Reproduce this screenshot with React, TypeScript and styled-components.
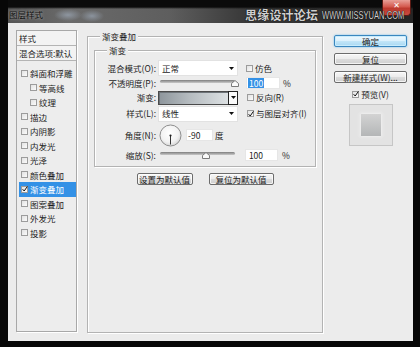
import React from "react";
import styled, { createGlobalStyle, css } from "styled-components";

const FONT = `"Noto Sans CJK SC", "Liberation Sans", sans-serif`;

const GlobalStyle = createGlobalStyle`
  html, body { margin: 0; padding: 0; background: #070707; }
  #root { width: 420px; height: 347px; }
`;

const Screen = styled.div`
  width: 420px;
  height: 347px;
  box-sizing: border-box;
  padding: 0 7px 6px 8px;
  background: #070707;
  display: flex;
  flex-direction: column;
  overflow: hidden;
  font-family: ${FONT};
  font-size: 8.5px;
  line-height: 1;
  color: #1c1c1c;
`;

const TitleBar = styled.div`
  position: relative;
  flex: none;
  height: 23px;
  box-sizing: border-box;
  display: flex;
  justify-content: space-between;
  align-items: flex-start;
  padding: 0 1px 0 1px;
  background:
    linear-gradient(to bottom, #0b0b0b 0, #0b0b0b 7px, rgba(0, 0, 0, 0) 9px),
    radial-gradient(14px 6px at 60px 15px, #8e96a0, rgba(0, 0, 0, 0)),
    radial-gradient(12px 6px at 84px 16px, #8b939d, rgba(0, 0, 0, 0)),
    linear-gradient(to right, #555 0%, #6a6a6a 15%, #5e5e5e 40%, #3a3a3a 58%, #242424 100%);
`;

const Title = styled.span`
  margin-top: 10px;
  color: #121212;
  text-shadow: 0 0 3px rgba(255, 255, 255, 0.55);
`;

const CloseButton = styled.div`
  position: relative;
  z-index: 2;
  width: 29px;
  height: 16px;
  margin-right: 1px;
  box-sizing: border-box;
  border: 1px solid #5a1a14;
  border-top: none;
  border-radius: 0 0 4px 4px;
  background-color: #c9483c;
  background-image: linear-gradient(#e8a098, #d4594e 45%, #bd3a2f 55%, #c94a3e);
  display: flex;
  align-items: center;
  justify-content: center;
  padding-bottom: 3px;
  color: #fff;
  font-family: "DejaVu Sans", sans-serif;
  font-size: 8px;
  font-weight: bold;
`;

const Watermark = styled.div`
  position: absolute;
  z-index: 3;
  left: 237px;
  top: 9px;
  display: flex;
  align-items: center;
  gap: 4px;
  color: #cfcfcf;
  text-shadow: 0 0 1px #000, 0 0 1px #000;
  white-space: nowrap;
`;

const WatermarkCn = styled.span`
  font-size: 12px;
  font-weight: bold;
  letter-spacing: 0.2px;
`;

const WatermarkUrl = styled.span`
  font-family: "Liberation Sans", sans-serif;
  font-size: 10.5px;
  display: inline-block;
  transform: scaleX(0.72);
  transform-origin: left center;
`;

const Body = styled.div`
  flex: 1;
  display: flex;
  align-items: flex-start;
  padding: 7px 6px 0 8px;
  background: #ececec;
`;

/* left column: style list */

const StyleList = styled.div`
  width: 61px;
  height: 302px;
  box-sizing: border-box;
  border: 1px solid #a8a8a8;
  box-shadow: 1px 1px 0 #fff;
  background: #ededed;
  display: flex;
  flex-direction: column;
`;

const ListHeader = styled.div<{ $h: number }>`
  height: ${(p) => p.$h}px;
  box-sizing: border-box;
  display: flex;
  align-items: center;
  padding-left: 2px;
  border-bottom: 1px solid #b4b4b4;
  background: #f3f3f3;
  white-space: nowrap;
`;

const ListBody = styled.div`
  padding-top: 5px;
  display: flex;
  flex-direction: column;
`;

const ListItem = styled.div<{ $indent?: boolean; $selected?: boolean }>`
  height: 14.5px;
  margin-left: 2px;
  padding-left: ${(p) => (p.$indent ? 11 : 2)}px;
  display: flex;
  align-items: center;
  gap: 2px;
  white-space: nowrap;
  ${(p) =>
    p.$selected &&
    css`
      background: #3391e6;
      color: #fff;
    `}
`;

const CheckBox = styled.span`
  flex: none;
  width: 5px;
  height: 5px;
  border: 1px solid #9c9c9c;
  background: linear-gradient(135deg, #e2e2e2, #fbfbfb);
  display: flex;
  align-items: center;
  justify-content: center;
`;

function Check({ on }: { on?: boolean }) {
  return (
    <CheckBox>
      {on && (
        <svg width="6" height="6" viewBox="0 0 6 6" style={{ overflow: "visible" }}>
          <path d="M0.6 3.2 L2.2 5 L5.4 0.4" fill="none" stroke="#111" strokeWidth="1" />
        </svg>
      )}
    </CheckBox>
  );
}

/* middle: gradient overlay settings */

const Group = styled.div<{ $h: number; $pad: string }>`
  position: relative;
  height: ${(p) => p.$h}px;
  box-sizing: border-box;
  padding: ${(p) => p.$pad};
  border: 1px solid #b3b3b3;
  box-shadow: inset 1px 1px 0 #fff, 1px 1px 0 #fff;
`;

const OuterGroup = styled(Group)`
  width: 236px;
  margin: 6px 0 0 10px;
  display: flex;
  flex-direction: column;
`;

const Legend = styled.span`
  position: absolute;
  top: -6px;
  left: 12px;
  padding: 0 2px;
  line-height: 11px;
  background: #ececec;
  white-space: nowrap;
`;

const FieldRow = styled.div<{ $h: number }>`
  height: ${(p) => p.$h}px;
  display: grid;
  grid-template-columns: 63px 80px 1fr;
  align-items: center;
`;

const FieldLabel = styled.span`
  text-align: right;
  padding-right: 2px;
  white-space: nowrap;
`;

const Select = styled.div`
  height: 16px;
  box-sizing: border-box;
  border: 1px solid #e2e2e2;
  background: #fff;
  display: flex;
  align-items: center;
  justify-content: space-between;
  padding: 0 3px 0 3px;
`;

function DownArrow() {
  return (
    <svg width="5" height="3" viewBox="0 0 5 3">
      <path d="M0 0 H5 L2.5 3 Z" fill="#111" />
    </svg>
  );
}

const GradientPicker = styled.div`
  height: 14px;
  display: flex;
`;

const GradientSwatch = styled.div`
  flex: 1;
  box-sizing: border-box;
  border: 1px solid #4a4a4a;
  border-right: none;
  background: linear-gradient(to right, #8e969c, #b6bcc0 45%, #dde1e3);
  box-shadow: inset 1px 1px 0 #6d7378;
`;

const DropButton = styled.div`
  width: 10px;
  box-sizing: border-box;
  border: 1px solid #222;
  background: #fafafa;
  display: flex;
  align-items: center;
  justify-content: center;
`;

const Extra = styled.div<{ $pad?: number }>`
  padding-left: ${(p) => p.$pad ?? 8}px;
  display: flex;
  align-items: center;
  gap: 2px;
  white-space: nowrap;
`;

const SliderBox = styled.div`
  position: relative;
  margin-left: 2px;
  width: 75px;
  height: 8px;
`;

const Track = styled.div`
  position: absolute;
  left: 0;
  right: 0;
  top: 1px;
  height: 3px;
  border-radius: 2px;
  background: linear-gradient(#7d7d7d, #c9c9c9);
`;

const Thumb = styled.svg`
  position: absolute;
  top: 1px;
`;

function Slider({ value }: { value: number }) {
  return (
    <SliderBox>
      <Track />
      <Thumb width="8" height="7" viewBox="0 0 8 7" style={{ left: `${value * 75 - 4}px` }}>
        <path d="M0.5 6.5 V3.5 L4 0.5 L7.5 3.5 V6.5 Z" fill="#fafafa" stroke="#7a7a7a" strokeWidth="1" />
      </Thumb>
    </SliderBox>
  );
}

const NumberInput = styled.div<{ $w: number }>`
  width: ${(p) => p.$w}px;
  height: 12px;
  box-sizing: border-box;
  border: 1px solid #e6e6e6;
  background: #fff;
  display: flex;
  align-items: center;
  padding-left: 1px;
`;

const Selected = styled.span`
  background: #3391e6;
  color: #fff;
  padding: 1px 1px;
`;

const AngleControl = styled.div`
  display: flex;
  align-items: center;
  gap: 4px;
  margin-left: 1px;
  white-space: nowrap;
`;

function Dial() {
  return (
    <svg width="23" height="23" viewBox="0 0 23 23">
      <defs>
        <radialGradient id="dialFill" cx="0.45" cy="0.4" r="0.6">
          <stop offset="0" stopColor="#ffffff" />
          <stop offset="0.7" stopColor="#f2f2f2" />
          <stop offset="1" stopColor="#d6d6d6" />
        </radialGradient>
      </defs>
      <circle cx="11.5" cy="11.5" r="10.5" fill="url(#dialFill)" stroke="#8e8e8e" strokeWidth="1" />
      <line x1="11.5" y1="11.5" x2="11.5" y2="20.5" stroke="#333" strokeWidth="1" />
      <circle cx="11.5" cy="11.5" r="1.1" fill="#222" />
    </svg>
  );
}

const DefaultsBar = styled.div`
  margin-top: 6px;
  display: flex;
  justify-content: center;
  gap: 16px;
`;

const Button = styled.div<{ $w?: number; $primary?: boolean }>`
  width: ${(p) => (p.$w ? `${p.$w}px` : "100%")};
  height: 12px;
  box-sizing: border-box;
  display: flex;
  align-items: center;
  justify-content: center;
  border: 1px solid #6c6c6c;
  border-radius: 2px;
  background: linear-gradient(#f7f7f7 0%, #ebebeb 50%, #dcdcdc 51%, #cfcfcf 100%);
  box-shadow: inset 0 0 0 1px rgba(255, 255, 255, 0.75);
  white-space: nowrap;
  ${(p) =>
    p.$primary &&
    css`
      border-color: #3a87bf;
      background: linear-gradient(#eef8fe 0%, #dcf1fc 50%, #c3e6f8 51%, #a9d8f2 100%);
      box-shadow: inset 0 0 0 1px #c9ecfc, 0 0 2px #62b8ea;
    `}
`;

/* right column */

const SideColumn = styled.div`
  width: 73px;
  margin-left: 11px;
  padding-top: 5px;
  display: flex;
  flex-direction: column;
  align-items: center;
  gap: 6px;
`;

const PreviewToggle = styled.div`
  margin-top: -1px;
  height: 12px;
  display: flex;
  align-items: center;
  gap: 2px;
  white-space: nowrap;
`;

const PreviewBox = styled.div`
  margin-top: -2px;
  width: 44px;
  height: 42px;
  box-sizing: border-box;
  border: 1px solid #c6c6c6;
  background: #e3e3e3;
  display: flex;
  align-items: center;
  justify-content: center;
`;

const PreviewSwatch = styled.div`
  width: 20px;
  height: 22px;
  background: linear-gradient(#d3d3d3, #b4b6b7);
  box-shadow: 0 0 3px 1px #f0f0f0;
`;

const layerStyles: { name: string; indent?: boolean; selected?: boolean; on?: boolean }[] = [
  { name: "斜面和浮雕" },
  { name: "等高线", indent: true },
  { name: "纹理", indent: true },
  { name: "描边" },
  { name: "内阴影" },
  { name: "内发光" },
  { name: "光泽" },
  { name: "颜色叠加" },
  { name: "渐变叠加", selected: true, on: true },
  { name: "图案叠加" },
  { name: "外发光" },
  { name: "投影" },
];

export default function App() {
  return (
    <>
      <GlobalStyle />
      <Screen>
        <TitleBar>
          <Title>图层样式</Title>
          <CloseButton>✕</CloseButton>
          <Watermark>
            <WatermarkCn>思缘设计论坛</WatermarkCn>
            <WatermarkUrl>WWW.MISSYUAN.COM</WatermarkUrl>
          </Watermark>
        </TitleBar>

        <Body>
          <StyleList>
            <ListHeader $h={15}>样式</ListHeader>
            <ListHeader $h={15}>混合选项:默认</ListHeader>
            <ListBody>
              {layerStyles.map((s) => (
                <ListItem key={s.name} $indent={s.indent} $selected={s.selected}>
                  <Check on={s.on} />
                  <span>{s.name}</span>
                </ListItem>
              ))}
            </ListBody>
          </StyleList>

          <OuterGroup $h={297} $pad="13px 6px 0 6px">
            <Legend>渐变叠加</Legend>
            <Group $h={117} $pad="9px 0 0 0">
              <Legend>渐变</Legend>
              <FieldRow $h={16}>
                <FieldLabel>混合模式(O):</FieldLabel>
                <Select>
                  <span>正常</span>
                  <DownArrow />
                </Select>
                <Extra>
                  <Check />
                  <span>仿色</span>
                </Extra>
              </FieldRow>
              <FieldRow $h={14}>
                <FieldLabel>不透明度(P):</FieldLabel>
                <Slider value={1} />
                <Extra>
                  <NumberInput $w={34}>
                    <Selected>100</Selected>
                  </NumberInput>
                  <span style={{ marginLeft: 1 }}>%</span>
                </Extra>
              </FieldRow>
              <FieldRow $h={15}>
                <FieldLabel>渐变:</FieldLabel>
                <GradientPicker>
                  <GradientSwatch />
                  <DropButton>
                    <DownArrow />
                  </DropButton>
                </GradientPicker>
                <Extra $pad={9}>
                  <Check />
                  <span>反向(R)</span>
                </Extra>
              </FieldRow>
              <FieldRow $h={17}>
                <FieldLabel>样式(L):</FieldLabel>
                <Select>
                  <span>线性</span>
                  <DownArrow />
                </Select>
                <Extra $pad={9}>
                  <Check on />
                  <span>与图层对齐(I)</span>
                </Extra>
              </FieldRow>
              <FieldRow $h={26}>
                <FieldLabel>角度(N):</FieldLabel>
                <AngleControl>
                  <Dial />
                  <NumberInput $w={27}>-90</NumberInput>
                  <span style={{ marginLeft: -2 }}>度</span>
                </AngleControl>
              </FieldRow>
              <FieldRow $h={14}>
                <FieldLabel>缩放(S):</FieldLabel>
                <Slider value={0.61} />
                <Extra $pad={7}>
                  <NumberInput $w={33}>&nbsp;100</NumberInput>
                  <span style={{ marginLeft: 2 }}>%</span>
                </Extra>
              </FieldRow>
            </Group>
            <DefaultsBar>
              <Button $w={56}>设置为默认值</Button>
              <Button $w={65}>复位为默认值</Button>
            </DefaultsBar>
          </OuterGroup>

          <SideColumn>
            <Button $primary>确定</Button>
            <Button>复位</Button>
            <Button>新建样式(W)...</Button>
            <PreviewToggle>
              <Check on />
              <span>预览(V)</span>
            </PreviewToggle>
            <PreviewBox>
              <PreviewSwatch />
            </PreviewBox>
          </SideColumn>
        </Body>
      </Screen>
    </>
  );
}
